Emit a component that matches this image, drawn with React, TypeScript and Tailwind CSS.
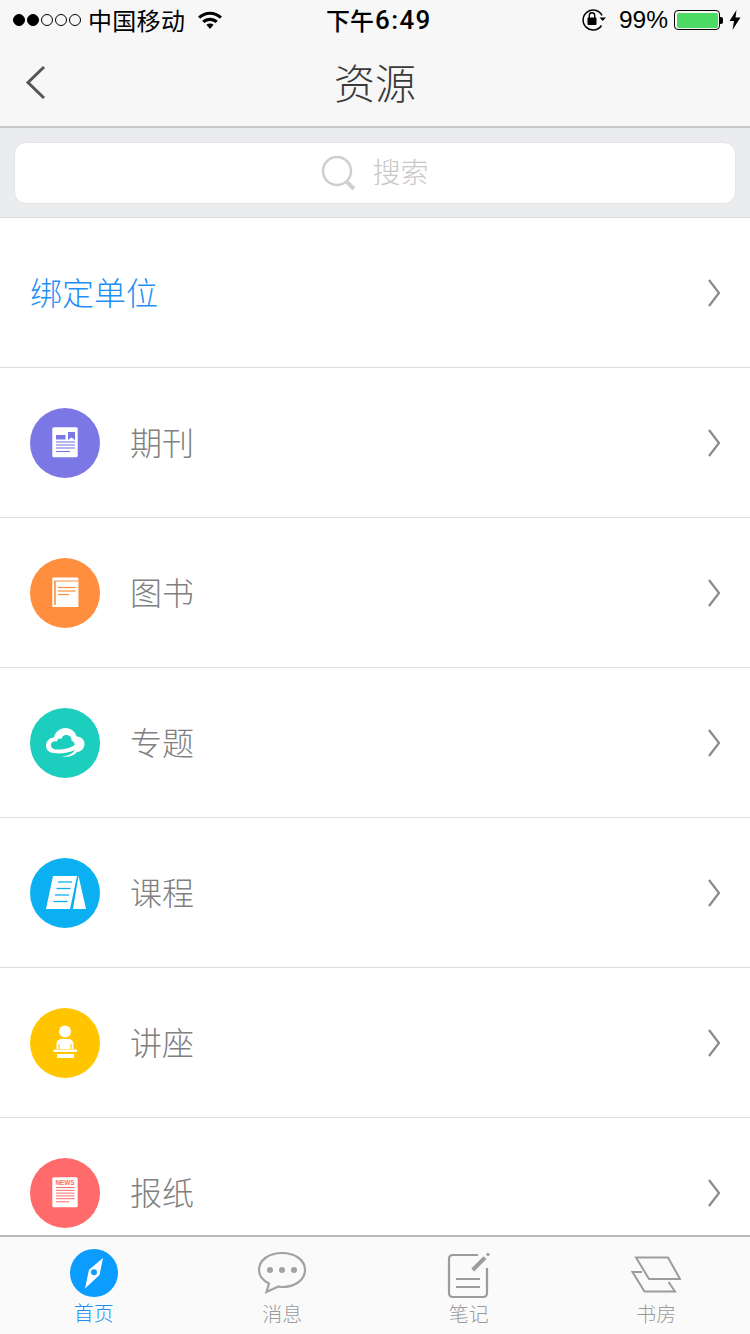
import React from "react";

const CJK = "font-['Noto_Sans_CJK_SC','Liberation_Sans',sans-serif]";

function Chevron() {
  return (
    <svg width="16" height="30" viewBox="0 0 16 30" fill="none" className="shrink-0">
      <path d="M3 2 L13 15 L3 28" stroke="#8a8a8a" strokeWidth="2.2" />
    </svg>
  );
}

function Circle({ bg, children }: { bg: string; children: React.ReactNode }) {
  return (
    <svg width="70" height="70" viewBox="0 0 70 70" className="shrink-0">
      <circle cx="35" cy="35" r="35" fill={bg} />
      {children}
    </svg>
  );
}

const Journal = () => (
  <Circle bg="#7b78e6">
    <rect x="22.3" y="19.3" width="25.4" height="30" rx="1.5" fill="#fff" />
    <rect x="26" y="27" width="9.5" height="4.5" fill="#7b78e6" />
    <path d="M38 24 H45 V32 L41.5 29.5 L38 32 Z" fill="#7b78e6" />
    <g stroke="#7b78e6" strokeWidth="1.1">
      <path d="M26 34 H45" />
      <path d="M26 37 H45" />
      <path d="M26 40 H45" />
      <path d="M26 43.5 H40" />
    </g>
  </Circle>
);

const Book = () => (
  <Circle bg="#ff8f3f">
    <rect x="22.3" y="19.5" width="26" height="29.5" rx="1" fill="#fff" />
    <rect x="24.2" y="22.5" width="24.2" height="24.5" fill="#ff8f3f" />
    <rect x="25.8" y="23.5" width="22.5" height="25.5" fill="#fff" />
    <g stroke="#ff8f3f" strokeWidth="1.2">
      <path d="M28 29.5 H45.5" />
      <path d="M28 33 H45.5" />
      <path d="M28 36.5 H39" />
    </g>
  </Circle>
);

const Cloud = () => (
  <Circle bg="#1cceBe">
    <path
      d="M24 45 C18.5 45 16 41 16 37.5 C16 33 20 29.5 24 29.5 C25 24 30 20 35.5 20 C41 20 45.5 24 46.5 28.5 C51 28 55 32 54.5 36.5 C54 41 50.5 44 47 44 C44 47.5 39 49.5 32 48.5 C38 48 42 46 45 42 C38 45 31 46 24 45 Z"
      fill="#fff"
    />
    <path
      d="M27 41.5 C23 41.5 21 39.5 21 37 C21 34.5 23.5 32.5 27 33.5 C27.5 31 29.5 30 31.5 31 C32 28 34.5 26.5 37 27 C40 27.5 42 30 41.5 33 C43 33 45 35 44.5 37 C42 39.5 35 41.5 27 41.5 Z"
      fill="#1cceBe"
    />
  </Circle>
);

const Course = () => (
  <Circle bg="#0bb0f2">
    <path d="M23 18 H47 L40 51 H16 Z" fill="#fff" />
    <path d="M48.5 18 L56 51 H43 Z" fill="#fff" />
    <g stroke="#0bb0f2" strokeWidth="1.3">
      <path d="M28 24 H42" />
      <path d="M26.5 30.5 H40.5" />
      <path d="M25 37 H39" />
      <path d="M23.5 43.5 H37.5" />
    </g>
  </Circle>
);

const Lecture = () => (
  <Circle bg="#ffc600">
    <circle cx="35" cy="23.5" r="6" fill="#fff" />
    <path d="M26.5 41 V36 C26.5 32.5 29 31 32 31 H38 C41 31 43.5 32.5 43.5 36 V41 H41.5 V36 H40.5 V41 H29.5 V36 H28.5 V41 Z" fill="#fff" />
    <rect x="23.5" y="41.5" width="23.5" height="2.4" fill="#fff" />
    <rect x="27" y="46" width="17" height="4" fill="#fff" />
  </Circle>
);

const News = () => (
  <Circle bg="#ff6b6b">
    <rect x="22.3" y="19.3" width="25.4" height="30" rx="1.5" fill="#fff" />
    <text x="35" y="27" textAnchor="middle" fontSize="6.4" fontWeight="700" fill="#ff6b6b" fontFamily="'Liberation Sans', sans-serif">
      NEWS
    </text>
    <g stroke="#ff6b6b" strokeWidth="1">
      <path d="M26 29.5 H44.5" />
      <path d="M26 32.3 H44.5" />
      <path d="M26 35.1 H44.5" />
      <path d="M26 37.9 H44.5" />
      <path d="M26 40.7 H44.5" />
      <path d="M26 43.8 H39" />
    </g>
  </Circle>
);

const rows = [
  { label: "期刊", Icon: Journal },
  { label: "图书", Icon: Book },
  { label: "专题", Icon: Cloud },
  { label: "课程", Icon: Course },
  { label: "讲座", Icon: Lecture },
  { label: "报纸", Icon: News },
];

function StatusBar() {
  return (
    <div className="relative h-10 flex items-center justify-between pl-[13px] pr-[9px] text-black">
      <div className="flex items-center">
        <div className="flex gap-[2px]">
          {[0, 1].map((i) => (
            <span key={i} className="w-3 h-3 rounded-full bg-black border border-black" />
          ))}
          {[0, 1, 2].map((i) => (
            <span key={i} className="w-3 h-3 rounded-full border border-black" />
          ))}
        </div>
        <span className="ml-[7px] text-[24px] leading-[40px] tracking-[0.3px]">中国移动</span>
        <svg width="26" height="20" viewBox="0 0 26 20" className="ml-3">
          <path d="M1 6.5 C8 0 18 0 25 6.5 L22.8 8.8 C17 3.5 9 3.5 3.2 8.8 Z" fill="#000" />
          <path d="M5.2 10.8 C9.8 6.8 16.2 6.8 20.8 10.8 L18.6 13 C15.2 10.2 10.8 10.2 7.4 13 Z" fill="#000" />
          <path d="M9.4 14.8 C11.6 13.2 14.4 13.2 16.6 14.8 L13 19 Z" fill="#000" />
        </svg>
      </div>
      <div className="absolute left-[326px] top-0 text-[24px] leading-[40px] font-medium flex items-center">
        <span>下午</span>
        <span className="font-['Roboto',sans-serif] text-[26px] tracking-[1.4px] ml-[1px]">6:49</span>
      </div>
      <div className="flex items-center">
        <svg width="26" height="24" viewBox="0 0 26 24" className="mr-[12px]">
          <path d="M20.5 17.5 A10 10 0 1 1 21 7.5" fill="none" stroke="#000" strokeWidth="1.5" />
          <path d="M18.5 9.5 H25 L21.7 13 Z" fill="#000" />
          <rect x="6.5" y="9.5" width="9" height="7.5" rx="1" fill="#000" />
          <path d="M8.3 10 V7.5 A2.7 2.7 0 0 1 13.7 7.5 V10" fill="none" stroke="#000" strokeWidth="1.4" />
        </svg>
        <span className="text-[24.5px] leading-[40px] font-['Liberation_Sans',sans-serif]">99%</span>
        <div className="ml-[6px] w-[46px] h-[20px] rounded-[4px] border border-black p-[1.5px]">
          <div className="h-full w-full rounded-[2px] bg-[#4cd964]" />
        </div>
        <span className="w-[3px] h-[7px] bg-black rounded-r-[2px]" />
        <svg width="12" height="20" viewBox="0 0 12 20" className="ml-[6px]">
          <path d="M7.5 0 L0.5 11 H5 L3.5 20 L11.5 7.5 H6.5 Z" fill="#000" />
        </svg>
      </div>
    </div>
  );
}

export default function App() {
  return (
    <div className={`${CJK} w-[750px] h-[1334px] overflow-hidden flex flex-col bg-white`}>
      <div className="bg-[#f7f7f7] border-b-2 border-[#c9c9cb] h-[128px] shrink-0">
        <StatusBar />
        <div className="relative h-[86px] flex items-center justify-center">
          <svg width="22" height="36" viewBox="0 0 22 36" className="absolute left-[25px] top-[25px]">
            <path d="M19 2 L3 17.5 L19 33" fill="none" stroke="#555" strokeWidth="3" />
          </svg>
          <span className="text-[41px] leading-[86px] font-light text-[#3a3a3a] -translate-y-[2px]">资源</span>
        </div>
      </div>

      <div className="h-[90px] shrink-0 bg-[#ebecee] border-b border-[#d8d8da] px-[14px] pt-[14px]">
        <div className="h-[62px] rounded-[12px] bg-white border border-[#e4e4e6] flex items-center justify-center">
          <svg width="36" height="36" viewBox="0 0 36 36" className="mr-[15px]">
            <circle cx="16" cy="16" r="14" fill="none" stroke="#cfcfcf" strokeWidth="2.5" />
            <path d="M26 27 L33 34" stroke="#cfcfcf" strokeWidth="4" />
          </svg>
          <span className="text-[28px] leading-none text-[#c8c8c8] font-light -translate-y-[2px]">搜索</span>
        </div>
      </div>

      <div className="flex-1 overflow-hidden">
        <div className="h-[150px] border-b border-[#dedede] flex items-center justify-between pl-[30px] pr-[28px]">
          <span className="text-[32px] font-light text-[#1f8ff5] -translate-y-[2px]">绑定单位</span>
          <Chevron />
        </div>
        {rows.map(({ label, Icon }) => (
          <div key={label} className="h-[150px] border-b border-[#dedede] flex items-center pl-[30px] pr-[28px]">
            <Icon />
            <span className="ml-[30px] flex-1 text-[32px] font-light text-[#808080] -translate-y-[2px]">{label}</span>
            <Chevron />
          </div>
        ))}
      </div>

      <div className="h-[99px] shrink-0 bg-[#fafafa] border-t-2 border-[#b8b8b8] grid grid-cols-4">
        <div className="flex flex-col items-center">
          <svg width="48" height="48" viewBox="0 0 48 48" className="mt-[12px]">
            <circle cx="24" cy="24" r="24" fill="#0a9cff" />
            <path d="M33 9 L29.5 26 L15 39.5 L19 20.7 Z" fill="#fff" />
            <circle cx="24" cy="23.3" r="3" fill="#0a9cff" />
          </svg>
          <span className="text-[20px] leading-[28px] font-light text-[#1f8ff5] mt-[2px]">首页</span>
        </div>
        <div className="flex flex-col items-center pl-[2px]">
          <svg width="50" height="44" viewBox="0 0 50 44" className="mt-[14px] mb-[5px]">
            <path d="M25 2 C12 2 2 9 2 19 C2 25 6 29.5 12 32.5 L9.5 41 L21.5 35.5 C23 36 24 36 25 36 C38 36 48 29 48 19 C48 9 38 2 25 2 Z" fill="none" stroke="#a2a2a2" strokeWidth="2.2" />
            <circle cx="13" cy="19" r="3" fill="#a2a2a2" />
            <circle cx="25" cy="19" r="3" fill="#a2a2a2" />
            <circle cx="37" cy="19" r="3" fill="#a2a2a2" />
          </svg>
          <span className="text-[20px] leading-[28px] font-light text-[#9a9a9a]">消息</span>
        </div>
        <div className="flex flex-col items-center">
          <svg width="44" height="48" viewBox="0 0 44 48" className="mt-[14px]">
            <path d="M31 4 H6 Q2 4 2 8 V42 Q2 46 6 46 H36 Q40 46 40 42 V17" fill="none" stroke="#9c9c9c" strokeWidth="2.2" />
            <path d="M38 6.7 L25.7 19" stroke="#9c9c9c" strokeWidth="4" />
            <path d="M40 4.5 L42 2.5" stroke="#9c9c9c" strokeWidth="3" />
            <path d="M9 28 H33 M9 36 H33" stroke="#9c9c9c" strokeWidth="2" />
          </svg>
          <span className="text-[20px] leading-[28px] font-light text-[#9a9a9a] mt-[1px]">笔记</span>
        </div>
        <div className="flex flex-col items-center">
          <svg width="50" height="38" viewBox="0 0 50 38" className="mt-[19px] mb-[6px]">
            <path d="M5 1.5 H37 L49 23 H18 Z" fill="none" stroke="#9c9c9c" strokeWidth="2" />
            <path d="M11 16 H1.5 L13.5 35.5 H44 L37.5 26" fill="none" stroke="#9c9c9c" strokeWidth="2" />
          </svg>
          <span className="text-[20px] leading-[28px] font-light text-[#9a9a9a]">书房</span>
        </div>
      </div>
    </div>
  );
}
